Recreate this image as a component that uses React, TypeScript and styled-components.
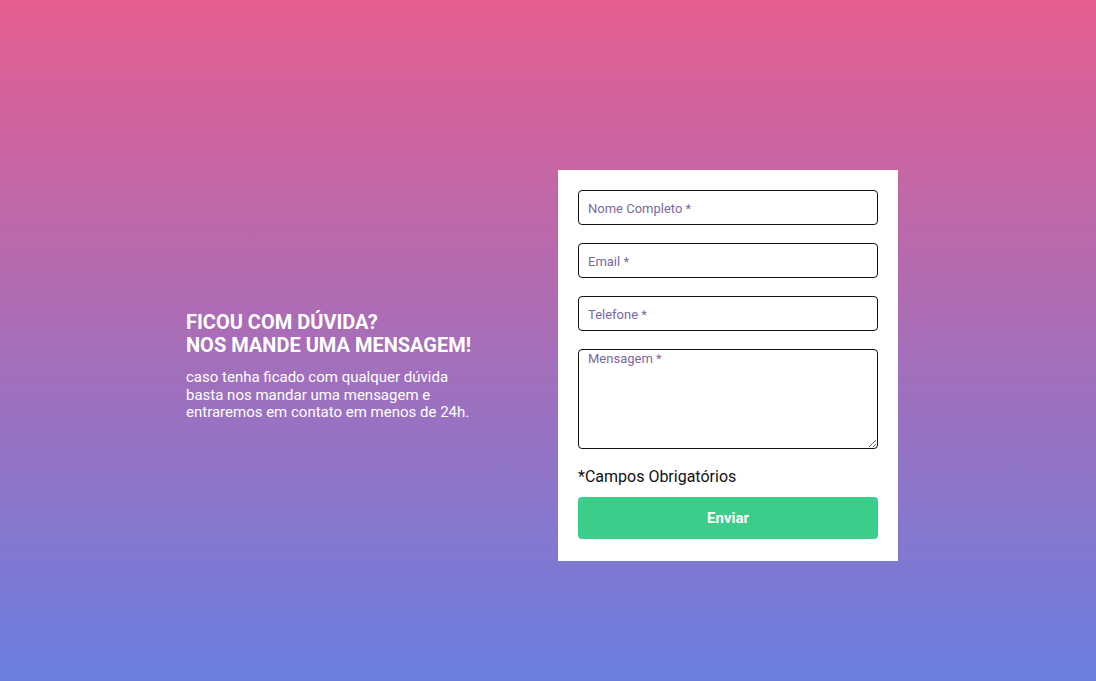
import React from "react";
import styled, { createGlobalStyle } from "styled-components";

const Global = createGlobalStyle`
  html, body { margin: 0; padding: 0; }
  body { font-family: Roboto, "Liberation Sans", Arial, sans-serif; }
  * { box-sizing: border-box; }
`;

const Page = styled.div`
  width: 100%;
  height: 681px;
  padding: 52px 0 0 186px;
  display: flex;
  align-items: center;
  gap: 72px;
  background: linear-gradient(180deg, #e55e90 0%, #6a7ee0 100%);
  overflow: hidden;
`;

const Intro = styled.div`
  width: 300px;
  color: #ffffff;
`;

const Heading = styled.h2`
  margin: 0 0 12px;
  font-size: 20px;
  line-height: 23px;
  font-weight: 700;
  text-transform: uppercase;
  white-space: nowrap;
`;

const Lead = styled.p`
  margin: 0;
  font-size: 15px;
  line-height: 17.5px;
  font-weight: 400;
`;

const Card = styled.form`
  width: 340px;
  margin-top: -2px;
  background: #ffffff;
  padding: 20px 20px 22px;
  display: flex;
  flex-direction: column;
`;

const Field = styled.input`
  width: 300px;
  height: 35px;
  margin-bottom: 18px;
  border: 1px solid #111111;
  border-radius: 4px;
  padding: 1px 9px 0;
  font-family: Roboto, "Liberation Sans", Arial, sans-serif;
  font-size: 13px;
  color: #333;
  outline: none;
  &::placeholder { color: #7a69a0; }
`;

const Area = styled.textarea`
  width: 300px;
  height: 100px;
  margin: 0 0 18px;
  border: 1px solid #111111;
  border-radius: 4px;
  padding: 1px 9px;
  font-family: Roboto, "Liberation Sans", Arial, sans-serif;
  font-size: 13px;
  color: #333;
  outline: none;
  display: block;
  &::placeholder { color: #7a69a0; }
`;

const Note = styled.div`
  font-size: 16px;
  line-height: 19px;
  color: #111111;
  margin-bottom: 11px;
`;

const Submit = styled.button`
  width: 300px;
  height: 42px;
  border: none;
  border-radius: 4px;
  background: #3ccd8a;
  color: #ffffff;
  font-family: Roboto, "Liberation Sans", Arial, sans-serif;
  font-size: 15px;
  font-weight: 700;
  cursor: pointer;
`;

export default function App() {
  return (
    <>
      <Global />
      <Page>
        <Intro>
          <Heading>
            Ficou com dúvida?
            <br />
            Nos mande uma mensagem!
          </Heading>
          <Lead>
            caso tenha ficado com qualquer dúvida basta nos mandar uma mensagem e entraremos em contato em menos de 24h.
          </Lead>
        </Intro>
        <Card onSubmit={(e) => e.preventDefault()}>
          <Field placeholder="Nome Completo *" />
          <Field placeholder="Email *" />
          <Field placeholder="Telefone *" />
          <Area placeholder="Mensagem *" />
          <Note>*Campos Obrigatórios</Note>
          <Submit type="submit">Enviar</Submit>
        </Card>
      </Page>
    </>
  );
}
